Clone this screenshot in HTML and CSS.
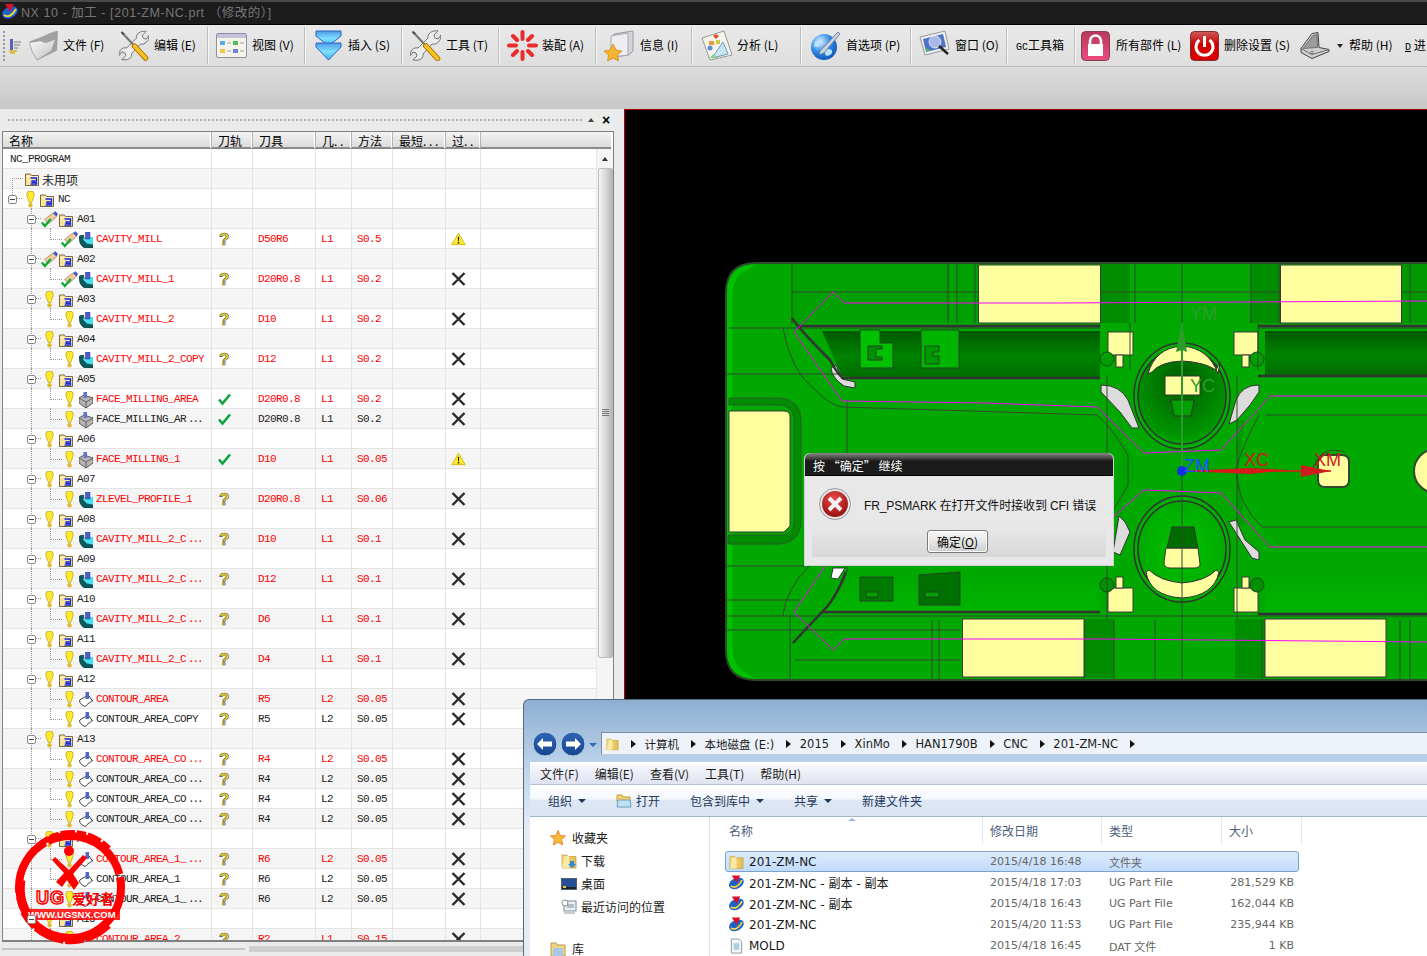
FILE: index.html
```html
<!DOCTYPE html>
<html lang="zh">
<head>
<meta charset="utf-8">
<title>NX 10 - 加工</title>
<link rel="stylesheet" href="styles.css">
</head>
<body>
<svg class="defs" aria-hidden="true">
  <defs>
    <linearGradient id="gFolderGrey" x1="0" y1="0" x2="1" y2="1"><stop offset="0" stop-color="#fcfcfc"/><stop offset=".6" stop-color="#d8d8d8"/><stop offset="1" stop-color="#9a9a9a"/></linearGradient>
    <linearGradient id="gBlue" x1="0" y1="0" x2="0" y2="1"><stop offset="0" stop-color="#4f9ae8"/><stop offset=".5" stop-color="#7fe0ff"/><stop offset="1" stop-color="#3ab4f6"/></linearGradient>
    <linearGradient id="gLock" x1="0" y1="0" x2="0" y2="1"><stop offset="0" stop-color="#b5395c"/><stop offset="1" stop-color="#ee4a7e"/></linearGradient>
    <linearGradient id="gPower" x1="0" y1="0" x2="0" y2="1"><stop offset="0" stop-color="#cc5a5a"/><stop offset=".45" stop-color="#cc0000"/><stop offset="1" stop-color="#e00000"/></linearGradient>
    <radialGradient id="gGlobe" cx=".35" cy=".3" r=".8"><stop offset="0" stop-color="#d8f0ff"/><stop offset=".5" stop-color="#2f8be6"/><stop offset="1" stop-color="#0b4db0"/></radialGradient>
    <radialGradient id="gErr" cx=".45" cy=".3" r=".8"><stop offset="0" stop-color="#e84a4a"/><stop offset="1" stop-color="#8c0808"/></radialGradient>
    <linearGradient id="gYF" x1="0" y1="0" x2="1" y2="0"><stop offset="0" stop-color="#f6dd82"/><stop offset="1" stop-color="#e5bd50"/></linearGradient>
    <linearGradient id="gNavBtn" x1="0" y1="0" x2="0" y2="1"><stop offset="0" stop-color="#2e66b4"/><stop offset="1" stop-color="#16458f"/></linearGradient>
    <linearGradient id="gBandT" x1="0" y1="0" x2="0" y2="1"><stop offset="0" stop-color="#005a00"/><stop offset=".55" stop-color="#008400"/><stop offset="1" stop-color="#006c00"/></linearGradient>
    <linearGradient id="gBandB" x1="0" y1="0" x2="0" y2="1"><stop offset="0" stop-color="#00a800"/><stop offset="1" stop-color="#00b400"/></linearGradient>
    <radialGradient id="gDomeT" cx=".5" cy=".35" r=".7"><stop offset="0" stop-color="#005c00"/><stop offset=".8" stop-color="#009400"/><stop offset="1" stop-color="#00b000"/></radialGradient>
    <radialGradient id="gDomeB" cx=".5" cy=".5" r=".7"><stop offset="0" stop-color="#00c400"/><stop offset="1" stop-color="#00a000"/></radialGradient>

    <symbol id="nx" viewBox="0 0 16 16">
      <path d="M0 11C0 5 6 2 12 2.500c4 .5 5 4 2 8-4 5-12 6-14 .5z" fill="#1b63c9"/>
      <path d="M2 11c4 3 9 0 12-6" fill="none" stroke="#ffd23a" stroke-width="1.800"/>
      <path d="M3 0h9L8 8z" fill="#d8102c"/>
    </symbol>
    <symbol id="wrench" viewBox="0 0 31 31">
      <path d="M8 18 18 8C17 3 23 0 28 1L24 5 25 8 28 9 31 5C31 11 27 15 22 14L13 24C14 29 9 31 3 30L7 26 6 23 3 22 0 26C0 21 3 17 8 18Z" fill="#ececec" stroke="#666" stroke-width=".9"/>
      <path d="M4 3 16 16" stroke="#777" stroke-width="2.200"/>
      <path d="M2.500 1.500 5 4" stroke="#444" stroke-width="2"/>
      <path d="M16 16 27.500 28.500" stroke="#a36d00" stroke-width="5.500" stroke-linecap="round"/>
      <path d="M16 16 27.500 28.500" stroke="#f8c020" stroke-width="3.800" stroke-linecap="round"/>
    </symbol>
    <symbol id="bulb" viewBox="0 0 16 16">
      <path d="M4.500 3a3.500 3 0 0 1 7 0c0 2-1.700 6-2.500 8h-2C6.200 9 4.500 5 4.500 3z" fill="#ffe930" stroke="#b79f12" stroke-width=".7"/>
      <circle cx="8" cy="13.500" r="1.700" fill="#f0c020" stroke="#b79f12" stroke-width=".5"/>
    </symbol>
    <symbol id="fld" viewBox="0 0 14 14">
      <path d="M.5 2h5l1 1.500h7v10H.5z" fill="#fbe59c" stroke="#77683a"/>
      <path d="M1 4h12v1H1z" fill="#fff6cf"/>
      <path d="M5.500 6h6v2.800H7v1.700h4.500v1.700h-6" fill="none" stroke="#1325e0" stroke-width="1.300"/>
    </symbol>
    <symbol id="pencheck" viewBox="0 0 17 17">
      <path d="M3.500 8.500 12 2l3.500 3.500-7.500 7z" fill="#f3caa0" stroke="#9c7a5a" stroke-width=".7"/>
      <path d="M12 2l2.500-1.700L17 3l-1.500 2.500z" fill="#4258c8"/>
      <path d="M.8 11.500l3 3.500 6-7" fill="none" stroke="#0cab2c" stroke-width="2.300"/>
    </symbol>
    <symbol id="mill" viewBox="0 0 14 16">
      <path d="M5 5h9v11H5z" fill="#47e0ee"/>
      <path d="M0 5c0-1.500 3-2 5-1.500L4 8l4 4 6 1v3H7C2.500 16 0 10 0 5z" fill="#0a5a60" stroke="#053033" stroke-width=".6"/>
      <path d="M6.500 0H11v7H6.500z" fill="#4b5fc8" stroke="#2a3790" stroke-width=".5"/>
    </symbol>
    <symbol id="face" viewBox="0 0 14 16">
      <path d="M0 6l5-3 9 3v5l-7 5-7-5z" fill="#b6b6b6" stroke="#3c3c3c" stroke-width=".8"/>
      <path d="M0 6l7 4 7-4M7 10v6" fill="none" stroke="#3c3c3c" stroke-width=".7"/>
      <path d="M4.500 0h3.500v6H4.500z" fill="#6575c9"/>
    </symbol>
    <symbol id="cont" viewBox="0 0 14 16">
      <path d="M.8 8C3 6 5 6 7 4h3l3.500 5c-2 0-2 2-4 2-1 2-3 4-4.500 3C3 13 0 11 .8 8z" fill="#fff" stroke="#222" stroke-width=".9"/>
      <path d="M6.500 0H10v7H6.500z" fill="#5466c8"/>
    </symbol>
    <symbol id="warn" viewBox="0 0 16 14">
      <path d="M8 .8 15.300 13H.7z" fill="#ffe92e" stroke="#c9a900" stroke-width=".8"/>
      <path d="M7.300 4.500h1.400l-.2 5h-1zM7.200 10.300h1.600v1.600H7.200z" fill="#222"/>
    </symbol>
    <symbol id="cross" viewBox="0 0 14 14">
      <path d="M1 1 13 13M13 1 1 13" stroke="#2b2b2b" stroke-width="2.400" fill="none"/>
    </symbol>
    <symbol id="tick" viewBox="0 0 14 14">
      <path d="M1.500 7.500 5 11.500 12.500 2.500" fill="none" stroke="#10a040" stroke-width="2.500"/>
    </symbol>
    <symbol id="yfolder" viewBox="0 0 16 16">
      <path d="M1 2h5l1 1.500h8V15H1z" fill="url(#gYF)" stroke="#c9a645" stroke-width=".8"/>
      <path d="M1 15 3.500 3.500 8 3v12z" fill="#fbeaa5"/>
    </symbol>
  </defs>
</svg>

<div class="app">
  <header class="titlebar">
    <svg class="tb-logo"><use href="#nx"/></svg>
    <span class="tb-text">NX 10 - 加工 - [201-ZM-NC.prt （修改的）]</span>
  </header>

  <nav class="menubar">
    <i class="grip"></i>
    <svg class="mini" viewBox="0 0 13 16"><path d="M2 1h3v11H2z" fill="#5763b8"/><path d="M6 4h7M6 7h6M6 10h4" stroke="#7a7a7a"/><path d="M1 13h8M2 15h5" stroke="#d8b320" stroke-width="1.500"/></svg>
    <div class="tool first">
      <svg class="ico i29" viewBox="0 0 29 31"><path d="M1 11 14 6l6-3 9-3-1 20-6 3L9 29z" fill="#a2a2a2" stroke="#8a8a8a" stroke-width=".6"/><path d="M0 12l11-2 6 2 10-4-4 13-15 9Q2 23 0 12z" fill="url(#gFolderGrey)" stroke="#8a8a8a" stroke-width=".7"/></svg>
      <span class="lb w41">文件 (F)</span>
    </div>
    <div class="tool t15"><svg class="ico i30"><use href="#wrench"/></svg><span class="lb w42">编辑 (E)</span></div>
    <i class="sep"></i>
    <div class="tool">
      <svg class="ico" viewBox="0 0 31 31"><rect x="0.500" y="3.500" width="30" height="24" rx="1.500" fill="#f6f3ea" stroke="#8f8fa8"/><path d="M1 4h29v4H1z" fill="#c3c3dc"/><rect x="4" y="11" width="5" height="4" fill="#5aa9e0"/><path d="M11 13h4M24 13h4M11 21h4M24 21h4" stroke="#a5a5a5"/><rect x="17" y="11" width="5" height="4" fill="#53bf53"/><rect x="4" y="19" width="5" height="4" fill="#eec84d"/><rect x="17" y="19" width="5" height="4" fill="#6f82d6"/></svg>
      <span class="lb w41">视图 (V)</span>
    </div>
    <i class="sep"></i>
    <div class="tool g4">
      <svg class="ico" viewBox="0 0 31 31"><path d="M3 1h25v5L15.500 16 3 6z" fill="url(#gBlue)" stroke="#2a62c0"/><path d="M3 13h25v4L15.500 30 3 17z" fill="url(#gBlue)" stroke="#2a62c0"/></svg>
      <span class="lb w42">插入 (S)</span>
    </div>
    <i class="sep"></i>
    <div class="tool"><svg class="ico"><use href="#wrench"/></svg><span class="lb w41">工具 (T)</span></div>
    <i class="sep"></i>
    <div class="tool g4">
      <svg class="ico" viewBox="0 0 31 31"><g stroke="#ea2c2c" stroke-width="4" stroke-linecap="round"><path d="M15.500 2v7M15.500 22v7M2 15.500h7M22 15.500h7M6 6l4 4M21 21l4 4M25 6l-4 4M10 21l-4 4"/></g></svg>
      <span class="lb w42">装配 (A)</span>
    </div>
    <i class="sep"></i>
    <div class="tool">
      <svg class="ico" viewBox="0 0 31 31"><path d="M10 4 29 1v20l-4 4-15 2z" fill="#d4d4dc" stroke="#9a9aa2"/><path d="M7 6 24 3v22l-17 2z" fill="#eeeef2" stroke="#aaa"/><path d="M9 14l3 6 6 1-4.500 4 1 6-5.500-3-5.500 3 1-6L0 21l6-1z" fill="#f6b52c" stroke="#c98112" stroke-width=".7"/></svg>
      <span class="lb w40">信息 (I)</span>
    </div>
    <i class="sep"></i>
    <div class="tool t1">
      <svg class="ico" viewBox="0 0 31 31"><path d="M1 8 23 1l8 24-22 5z" fill="#f5f3ec" stroke="#9a9a9a"/><path d="M12 6l3-2 3 2-3 3z" fill="#e05030"/><path d="M8 11h5v4H8z" fill="#e89a3a"/><circle cx="9" cy="18" r="2.500" fill="#5b8ed8"/><path d="M15 10h4v4h-4z" fill="#d0c840"/><path d="M11 28 22 12l5 12z" fill="#c9e4f4" stroke="#6b9dc0"/><path d="M12 24l5 4H9z" fill="#8fd08f"/></svg>
      <span class="lb w40">分析 (L)</span>
    </div>
    <i class="sep far"></i>
    <div class="tool">
      <svg class="ico" viewBox="0 0 31 31"><circle cx="14" cy="17" r="13" fill="url(#gGlobe)"/><path d="M5 12c4-3 6 0 5 3s-5 2-6 1zM15 20c4-2 8-1 7 3-2 3-6 4-7 1z" fill="#b8e2ff"/><path d="M10 21 28 2l2 2-16 19-5 2z" fill="#c8d3e0" stroke="#5a6b85" stroke-width=".8"/></svg>
      <span class="lb w53">首选项 (P)</span>
    </div>
    <i class="sep"></i>
    <div class="tool">
      <svg class="ico" viewBox="0 0 31 31"><path d="M1 7 26 1l4 18-24 6z" fill="#eee" stroke="#999"/><path d="M4 9 24 4l3 13-20 5z" fill="#4e73c5"/><circle cx="16" cy="12" r="6" fill="#a7b9e8" stroke="#dde"/><path d="M20 16l9 8" stroke="#222" stroke-width="2.500"/><path d="M7 19h3v2H7z" fill="#40d040"/></svg>
      <span class="lb w40">窗口 (O)</span>
    </div>
    <i class="sep"></i>
    <span class="lb w48 solo"><span class="mono">GC</span>工具箱</span>
    <i class="sep tight"></i>
    <div class="tool g6">
      <svg class="ico i29" viewBox="0 0 29 30"><rect x=".5" y=".5" width="28" height="29" rx="4" fill="url(#gLock)" stroke="#804055"/><path d="M9 14V10a5.500 5.500 0 0 1 11 0v4" fill="none" stroke="#fff" stroke-width="2.500"/><rect x="7" y="13" width="15" height="12" fill="#fff"/></svg>
      <span class="lb w64">所有部件 (L)</span>
    </div>
    <div class="tool t10">
      <svg class="ico i29" viewBox="0 0 29 30"><rect x=".5" y=".5" width="28" height="29" rx="4" fill="url(#gPower)" stroke="#803030"/><path d="M9.500 9a8.500 8.500 0 1 0 10 0" fill="none" stroke="#fff" stroke-width="3"/><path d="M14.500 5v11" stroke="#fff" stroke-width="3"/></svg>
      <span class="lb w65">删除设置 (S)</span>
    </div>
    <div class="tool t11"><svg class="ico i30" viewBox="0 0 30 30"><path d="M1 18 12 3l6-1 1 15 10 2v2l-17 7-11-6z" fill="#cfcfcf" stroke="#444"/><path d="M3 18 13 5l4-1 .5 13z" fill="#9c9c9c" stroke="#555" stroke-width=".7"/><path d="M1 18l11 6 17-5" fill="none" stroke="#555" stroke-width=".8"/><circle cx="12" cy="22" r="1.300" fill="#eee" stroke="#444" stroke-width=".7"/></svg></div>
    <i class="caret"></i>
    <span class="lb w41">帮助 (H)</span>
    <span class="lb w30 next"><u class="mono">D</u> 进</span>
  </nav>

  <div class="ribbon"></div>

  <main class="work">
    <section class="panel">
      <div class="phead"><i class="pgrip"></i><span class="pup"></span><span class="pclose">×</span></div>
      <div class="navtree">
        <div class="thead cols">
          <span>名称</span><span>刀轨</span><span>刀具</span><span>几. .</span><span>方法</span><span>最短. . .</span><span>过. .</span><span></span>
        </div>
        <div class="tbody">
          <div class="rows">
            <div class="row cols"><span class="name plain"><b>NC_PROGRAM</b></span><span></span><span></span><span></span><span></span><span></span><span></span></div>
            <div class="row cols"><span class="name unused"><svg class="fd"><use href="#fld"/></svg><b class="cjk">未用项</b></span><span></span><span></span><span></span><span></span><span></span><span></span></div>
            <div class="row cols"><span class="name lv0"><i class="mn"></i><svg class="st"><use href="#bulb"/></svg><svg class="fd"><use href="#fld"/></svg><b>NC</b></span><span></span><span></span><span></span><span></span><span></span><span></span></div>

            <div class="row cols"><span class="name lv1"><i class="mn"></i><svg class="st"><use href="#pencheck"/></svg><svg class="fd"><use href="#fld"/></svg><b>A01</b></span><span></span><span></span><span></span><span></span><span></span><span></span></div>
            <div class="row cols red"><span class="name lv2"><svg class="st"><use href="#pencheck"/></svg><svg class="fd"><use href="#mill"/></svg><b>CAVITY_MILL</b></span><span><em class="q">?</em></span><span>D50R6</span><span>L1</span><span>S0.5</span><span></span><span><svg class="fl"><use href="#warn"/></svg></span></div>

            <div class="row cols"><span class="name lv1"><i class="mn"></i><svg class="st"><use href="#pencheck"/></svg><svg class="fd"><use href="#fld"/></svg><b>A02</b></span><span></span><span></span><span></span><span></span><span></span><span></span></div>
            <div class="row cols red"><span class="name lv2"><svg class="st"><use href="#pencheck"/></svg><svg class="fd"><use href="#mill"/></svg><b>CAVITY_MILL_1</b></span><span><em class="q">?</em></span><span>D20R0.8</span><span>L1</span><span>S0.2</span><span></span><span><svg class="fl"><use href="#cross"/></svg></span></div>

            <div class="row cols"><span class="name lv1"><i class="mn"></i><svg class="st"><use href="#bulb"/></svg><svg class="fd"><use href="#fld"/></svg><b>A03</b></span><span></span><span></span><span></span><span></span><span></span><span></span></div>
            <div class="row cols red"><span class="name lv2"><svg class="st"><use href="#bulb"/></svg><svg class="fd"><use href="#mill"/></svg><b>CAVITY_MILL_2</b></span><span><em class="q">?</em></span><span>D10</span><span>L1</span><span>S0.2</span><span></span><span><svg class="fl"><use href="#cross"/></svg></span></div>

            <div class="row cols"><span class="name lv1"><i class="mn"></i><svg class="st"><use href="#bulb"/></svg><svg class="fd"><use href="#fld"/></svg><b>A04</b></span><span></span><span></span><span></span><span></span><span></span><span></span></div>
            <div class="row cols red"><span class="name lv2"><svg class="st"><use href="#bulb"/></svg><svg class="fd"><use href="#mill"/></svg><b>CAVITY_MILL_2_COPY</b></span><span><em class="q">?</em></span><span>D12</span><span>L1</span><span>S0.2</span><span></span><span><svg class="fl"><use href="#cross"/></svg></span></div>

            <div class="row cols"><span class="name lv1"><i class="mn"></i><svg class="st"><use href="#bulb"/></svg><svg class="fd"><use href="#fld"/></svg><b>A05</b></span><span></span><span></span><span></span><span></span><span></span><span></span></div>
            <div class="row cols red"><span class="name lv2"><svg class="st"><use href="#bulb"/></svg><svg class="fd"><use href="#face"/></svg><b>FACE_MILLING_AREA</b></span><span><svg class="fl tk"><use href="#tick"/></svg></span><span>D20R0.8</span><span>L1</span><span>S0.2</span><span></span><span><svg class="fl"><use href="#cross"/></svg></span></div>
            <div class="row cols"><span class="name lv2"><svg class="st"><use href="#bulb"/></svg><svg class="fd"><use href="#face"/></svg><b>FACE_MILLING_AR<i class="el">...</i></b></span><span><svg class="fl tk"><use href="#tick"/></svg></span><span>D20R0.8</span><span>L1</span><span>S0.2</span><span></span><span><svg class="fl"><use href="#cross"/></svg></span></div>

            <div class="row cols"><span class="name lv1"><i class="mn"></i><svg class="st"><use href="#bulb"/></svg><svg class="fd"><use href="#fld"/></svg><b>A06</b></span><span></span><span></span><span></span><span></span><span></span><span></span></div>
            <div class="row cols red"><span class="name lv2"><svg class="st"><use href="#bulb"/></svg><svg class="fd"><use href="#face"/></svg><b>FACE_MILLING_1</b></span><span><svg class="fl tk"><use href="#tick"/></svg></span><span>D10</span><span>L1</span><span>S0.05</span><span></span><span><svg class="fl"><use href="#warn"/></svg></span></div>

            <div class="row cols"><span class="name lv1"><i class="mn"></i><svg class="st"><use href="#bulb"/></svg><svg class="fd"><use href="#fld"/></svg><b>A07</b></span><span></span><span></span><span></span><span></span><span></span><span></span></div>
            <div class="row cols red"><span class="name lv2"><svg class="st"><use href="#bulb"/></svg><svg class="fd"><use href="#mill"/></svg><b>ZLEVEL_PROFILE_1</b></span><span><em class="q">?</em></span><span>D20R0.8</span><span>L1</span><span>S0.06</span><span></span><span><svg class="fl"><use href="#cross"/></svg></span></div>

            <div class="row cols"><span class="name lv1"><i class="mn"></i><svg class="st"><use href="#bulb"/></svg><svg class="fd"><use href="#fld"/></svg><b>A08</b></span><span></span><span></span><span></span><span></span><span></span><span></span></div>
            <div class="row cols red"><span class="name lv2"><svg class="st"><use href="#bulb"/></svg><svg class="fd"><use href="#mill"/></svg><b>CAVITY_MILL_2_C<i class="el">...</i></b></span><span><em class="q">?</em></span><span>D10</span><span>L1</span><span>S0.1</span><span></span><span><svg class="fl"><use href="#cross"/></svg></span></div>

            <div class="row cols"><span class="name lv1"><i class="mn"></i><svg class="st"><use href="#bulb"/></svg><svg class="fd"><use href="#fld"/></svg><b>A09</b></span><span></span><span></span><span></span><span></span><span></span><span></span></div>
            <div class="row cols red"><span class="name lv2"><svg class="st"><use href="#bulb"/></svg><svg class="fd"><use href="#mill"/></svg><b>CAVITY_MILL_2_C<i class="el">...</i></b></span><span><em class="q">?</em></span><span>D12</span><span>L1</span><span>S0.1</span><span></span><span><svg class="fl"><use href="#cross"/></svg></span></div>

            <div class="row cols"><span class="name lv1"><i class="mn"></i><svg class="st"><use href="#bulb"/></svg><svg class="fd"><use href="#fld"/></svg><b>A10</b></span><span></span><span></span><span></span><span></span><span></span><span></span></div>
            <div class="row cols red"><span class="name lv2"><svg class="st"><use href="#bulb"/></svg><svg class="fd"><use href="#mill"/></svg><b>CAVITY_MILL_2_C<i class="el">...</i></b></span><span><em class="q">?</em></span><span>D6</span><span>L1</span><span>S0.1</span><span></span><span><svg class="fl"><use href="#cross"/></svg></span></div>

            <div class="row cols"><span class="name lv1"><i class="mn"></i><svg class="st"><use href="#bulb"/></svg><svg class="fd"><use href="#fld"/></svg><b>A11</b></span><span></span><span></span><span></span><span></span><span></span><span></span></div>
            <div class="row cols red"><span class="name lv2"><svg class="st"><use href="#bulb"/></svg><svg class="fd"><use href="#mill"/></svg><b>CAVITY_MILL_2_C<i class="el">...</i></b></span><span><em class="q">?</em></span><span>D4</span><span>L1</span><span>S0.1</span><span></span><span><svg class="fl"><use href="#cross"/></svg></span></div>

            <div class="row cols"><span class="name lv1"><i class="mn"></i><svg class="st"><use href="#bulb"/></svg><svg class="fd"><use href="#fld"/></svg><b>A12</b></span><span></span><span></span><span></span><span></span><span></span><span></span></div>
            <div class="row cols red"><span class="name lv2"><svg class="st"><use href="#bulb"/></svg><svg class="fd"><use href="#cont"/></svg><b>CONTOUR_AREA</b></span><span><em class="q">?</em></span><span>R5</span><span>L2</span><span>S0.05</span><span></span><span><svg class="fl"><use href="#cross"/></svg></span></div>
            <div class="row cols"><span class="name lv2"><svg class="st"><use href="#bulb"/></svg><svg class="fd"><use href="#cont"/></svg><b>CONTOUR_AREA_COPY</b></span><span><em class="q">?</em></span><span>R5</span><span>L2</span><span>S0.05</span><span></span><span><svg class="fl"><use href="#cross"/></svg></span></div>

            <div class="row cols"><span class="name lv1"><i class="mn"></i><svg class="st"><use href="#bulb"/></svg><svg class="fd"><use href="#fld"/></svg><b>A13</b></span><span></span><span></span><span></span><span></span><span></span><span></span></div>
            <div class="row cols red"><span class="name lv2"><svg class="st"><use href="#bulb"/></svg><svg class="fd"><use href="#cont"/></svg><b>CONTOUR_AREA_CO<i class="el">...</i></b></span><span><em class="q">?</em></span><span>R4</span><span>L2</span><span>S0.05</span><span></span><span><svg class="fl"><use href="#cross"/></svg></span></div>
            <div class="row cols"><span class="name lv2"><svg class="st"><use href="#bulb"/></svg><svg class="fd"><use href="#cont"/></svg><b>CONTOUR_AREA_CO<i class="el">...</i></b></span><span><em class="q">?</em></span><span>R4</span><span>L2</span><span>S0.05</span><span></span><span><svg class="fl"><use href="#cross"/></svg></span></div>
            <div class="row cols"><span class="name lv2"><svg class="st"><use href="#bulb"/></svg><svg class="fd"><use href="#cont"/></svg><b>CONTOUR_AREA_CO<i class="el">...</i></b></span><span><em class="q">?</em></span><span>R4</span><span>L2</span><span>S0.05</span><span></span><span><svg class="fl"><use href="#cross"/></svg></span></div>
            <div class="row cols"><span class="name lv2"><svg class="st"><use href="#bulb"/></svg><svg class="fd"><use href="#cont"/></svg><b>CONTOUR_AREA_CO<i class="el">...</i></b></span><span><em class="q">?</em></span><span>R4</span><span>L2</span><span>S0.05</span><span></span><span><svg class="fl"><use href="#cross"/></svg></span></div>

            <div class="row cols"><span class="name lv1"><i class="mn"></i><svg class="st"><use href="#bulb"/></svg><svg class="fd"><use href="#fld"/></svg><b>A14</b></span><span></span><span></span><span></span><span></span><span></span><span></span></div>
            <div class="row cols red"><span class="name lv2"><svg class="st"><use href="#bulb"/></svg><svg class="fd"><use href="#cont"/></svg><b>CONTOUR_AREA_1_<i class="el">...</i></b></span><span><em class="q">?</em></span><span>R6</span><span>L2</span><span>S0.05</span><span></span><span><svg class="fl"><use href="#cross"/></svg></span></div>
            <div class="row cols"><span class="name lv2"><svg class="st"><use href="#bulb"/></svg><svg class="fd"><use href="#cont"/></svg><b>CONTOUR_AREA_1</b></span><span><em class="q">?</em></span><span>R6</span><span>L2</span><span>S0.05</span><span></span><span><svg class="fl"><use href="#cross"/></svg></span></div>
            <div class="row cols"><span class="name lv2"><svg class="st"><use href="#bulb"/></svg><svg class="fd"><use href="#cont"/></svg><b>CONTOUR_AREA_1_<i class="el">...</i></b></span><span><em class="q">?</em></span><span>R6</span><span>L2</span><span>S0.05</span><span></span><span><svg class="fl"><use href="#cross"/></svg></span></div>

            <div class="row cols"><span class="name lv1"><i class="mn"></i><svg class="st"><use href="#bulb"/></svg><svg class="fd"><use href="#fld"/></svg><b>A15</b></span><span></span><span></span><span></span><span></span><span></span><span></span></div>
            <div class="row cols red"><span class="name lv2"><svg class="st"><use href="#bulb"/></svg><svg class="fd"><use href="#cont"/></svg><b>CONTOUR_AREA_2</b></span><span><em class="q">?</em></span><span>R2</span><span>L1</span><span>S0.15</span><span></span><span><svg class="fl"><use href="#cross"/></svg></span></div>
          </div>
          <aside class="vscroll"><i class="vup"></i><i class="vthumb"></i></aside>
        </div>
      </div>
      <div class="hscroll"><i class="h1"></i><i class="h2"></i></div>
    </section>

    <section class="viewport">
      <svg class="model" viewBox="625 110 802 846" aria-label="模型">
        <path d="M756 263H1440V680H756Q726 680 726 650V293Q726 263 756 263Z" fill="#00a800" stroke="#2c4a2c" stroke-width="2"/>
        <path d="M727 293Q727 265 756 264l-8 6Q733 275 732 296V645Q733 668 748 674l8 5Q727 678 727 650Z" fill="#00c000"/>
        <!-- top and bottom bands -->
        <rect x="793" y="264" width="185" height="59" fill="#00a000"/>
        <rect x="1100" y="264" width="30" height="59" fill="#008e00"/>
        <rect x="1250" y="264" width="30" height="59" fill="#008e00"/>
        <rect x="1084" y="619" width="30" height="59" fill="#008e00"/>
        <rect x="1235" y="619" width="30" height="59" fill="#008e00"/>
        <rect x="1401" y="264" width="26" height="59" fill="#009800"/>
        <path d="M822 331H1100V378H860L842 376Z" fill="url(#gBandT)"/>
        <path d="M1265 331H1427V375H1265Z" fill="url(#gBandT)"/>
        <path d="M846 573H1100V612H820Z" fill="url(#gBandB)"/>
        <path d="M1265 574H1427V612H1265Z" fill="url(#gBandB)"/>
        <path d="M1107 420H1122L1135 470 1122 520H1107Z" fill="#00a000" opacity=".5"/>
        <path d="M1237 420H1245L1238 471 1245 525H1237Z" fill="#008a00" opacity=".5"/>
        <!-- yellow faces -->
        <g fill="#ffffa0" stroke="#3a3a3a" stroke-width="1">
          <rect x="978.500" y="265" width="122" height="58"/>
          <rect x="1280.500" y="265" width="121" height="58"/>
          <rect x="962.500" y="619" width="122" height="58"/>
          <rect x="1265" y="619" width="121" height="58"/>
          <path d="M729 411H784Q790 411 790 417V526L784 532H729Z"/>
          <rect x="1108" y="332" width="25" height="23"/>
          <rect x="1234" y="332" width="24" height="23"/>
          <rect x="1108" y="588" width="25" height="24"/>
          <rect x="1234" y="588" width="24" height="24"/>
          <rect x="1116" y="355" width="7" height="12"/>
          <rect x="1242" y="355" width="7" height="12"/>
          <rect x="1116" y="577" width="7" height="11"/>
          <rect x="1242" y="577" width="7" height="11"/>
        </g>
        <path d="M729 398H780Q801 400 801 420V525Q798 543 780 544H728V535H784Q794 532 794 522V418Q792 406 780 405H729Z" fill="#008c00" stroke="#2d5a2d" stroke-width="1"/>
        <!-- locks -->
        <g stroke="#224422" stroke-width="1">
          <path d="M860 330H880V343H893V368H860Z" fill="#00c000"/>
          <path d="M921 330H959V368H921Z" fill="#00b400"/>
          <path d="M868 346h14v3h-6v8h6v3h-14z" fill="#009000"/>
          <path d="M925 346h14v6h-6v4h6v8h-14z" fill="#009800"/>
          <path d="M860 577H893V601H860Z" fill="#007a00"/>
          <path d="M919 575 960 572V605H919Z" fill="#007000"/>
          <path d="M866 592h12v5h-12zM925 592h14v5h-14z" fill="#00a000"/>
          <circle cx="1107" cy="359" r="7" fill="#00a000"/>
          <circle cx="1257" cy="359" r="7" fill="#00a000"/>
          <circle cx="1107" cy="585" r="7" fill="#009000"/>
          <circle cx="1257" cy="585" r="7" fill="#009000"/>
        </g>
        <!-- grey wings -->
        <g fill="#dcdcdc" stroke="#333" stroke-width="1">
          <path d="M831 368l5-3 6 14 13 3v6l-11-2Q832 378 831 368Z"/>
          <path d="M1101 385Q1120 385 1128 400L1139 428H1132L1120 412 1101 392Z"/>
          <path d="M1259 385Q1242 385 1236 400L1229 424 1237 420 1250 405 1259 392Z"/>
          <path d="M1113 552 1119 516 1125 522 1130 532 1120 555Z"/>
          <path d="M1252 558 1229 522 1236 520 1245 540 1259 552V560Z"/>
          <path d="M833 568H845L838 579 831 578Z" fill="#fff"/>
        </g>
        <!-- domes -->
        <ellipse cx="1182" cy="396" rx="48" ry="53" fill="#00b000" stroke="#333" stroke-width="1.500"/>
        <ellipse cx="1182" cy="396" rx="44" ry="48" fill="url(#gDomeT)" stroke="#333" stroke-width="1.500"/>
        <ellipse cx="1182" cy="549" rx="48" ry="53" fill="#00b000" stroke="#333" stroke-width="1.500"/>
        <ellipse cx="1182" cy="549" rx="44" ry="48" fill="url(#gDomeB)" stroke="#333" stroke-width="1.500"/>
        <g fill="#ffffa0" stroke="#333" stroke-width="1">
          <path d="M1148 374Q1155 348 1182 346Q1209 348 1218 374L1220 362 1216 370Q1204 362 1182 361Q1160 362 1152 372Z"/>
          <path d="M1165 376H1200V395H1165Z"/>
          <path d="M1146 572Q1150 596 1182 598Q1214 596 1219 572L1216 570Q1206 581 1182 583Q1160 581 1149 570Z"/>
          <path d="M1166 548H1198L1200 564Q1200 568 1194 568H1170Q1164 568 1164 562Z"/>
        </g>
        <path d="M1171 400H1194L1191 416H1174Z" fill="#00a000" stroke="#333"/>
        <path d="M1172 527H1194L1198 548H1167Z" fill="#006c00" stroke="#333"/>
        <!-- thin edges -->
        <g fill="none" stroke="#2f4a2f" stroke-width="1">
          <path d="M792 264V325M948 264V323M957 264V323M975 264V323M1135 264V323M1251 264V323M1279 264V323M1410 264V323"/>
          <path d="M792 292H978M1100 292H1280M1401 292H1427"/>
          <path d="M729 328H1100M1258 328H1427"/>
          <path d="M727 374H842M1259 376H1427"/>
          <path d="M783 328Q790 370 815 390 830 405 842 407L1097 415Q1110 425 1128 455V485Q1120 500 1112 512"/>
          <path d="M1259 415Q1240 450 1236 471 1238 505 1262 527H1427"/>
          <path d="M1265 415H1427"/>
          <path d="M1182 264V680M1107 375V620M1237 375V620M1130 323V370M1258 323V370"/>
          <path d="M847 400V572M848 556H1100"/>
          <path d="M727 566H805M727 600H800M727 616H1427M727 630H960"/>
          <path d="M790 615V680M795 660H960M932 620V680M939 620V680M1084 620V680M1114 620V680M1155 620V680M1262 620V680M1400 620V680M1410 620V680"/>
          <path d="M783 616Q785 590 810 565"/>
          <path d="M1312 471Q1320 444 1345 452"/>
        </g>
        <g fill="none" stroke="#333" stroke-width="2.500">
          <path d="M797 326H1100M1258 326H1427"/>
          <path d="M792 318Q800 330 830 360 838 375 843 378L1100 378"/>
          <path d="M1258 376H1427"/>
          <path d="M846 572Q835 600 822 612 805 630 793 643"/>
          <path d="M822 612H1100M1258 614H1427"/>
        </g>
        <path d="M1318 462Q1318 455 1325 455H1342Q1349 455 1349 462V480Q1349 487 1342 487H1325Q1318 487 1318 480Z" fill="#ffffa0" stroke="#2f4a2f" stroke-width="2"/>
        <circle cx="1436" cy="471" r="22" fill="#ffffa0" stroke="#2f4a2f" stroke-width="2"/>
        <!-- toolpath -->
        <g fill="none" stroke="#ff00ff" stroke-width="1">
          <path d="M794 332 833 292 844 303H1056L1427 301"/>
          <path d="M794 332 842 401 984 403 1097 407 1144 453 1221 450 1270 396H1427"/>
          <path d="M1112 518 1144 490 1221 493 1270 547H1427"/>
          <path d="M826 565 794 612 833 650 844 639H1100L1427 642"/>
        </g>
        <!-- axes -->
        <path d="M1182 471V323" stroke="#2c9c2c" stroke-width="2"/>
        <path d="M1182 350 1176 352 1182 322 1187 352Z" fill="#2c9c2c"/>
        <path d="M1182 471 1250 468 1290 470 1250 474Z" fill="#d01c1c"/>
        <path d="M1182 471H1331" stroke="#e01818" stroke-width="1.500"/>
        <path d="M1301 465 1331 471 1301 477Z" fill="#d01c1c"/>
        <circle cx="1182" cy="471" r="5" fill="#1530e0"/>
        <g class="axis">
          <text x="1190" y="320" fill="#2d9d2d">YM</text>
          <text x="1190" y="392" fill="#2d9d2d">YC</text>
          <text x="1184" y="472" fill="#1a50ff">ZM</text>
          <text x="1244" y="466" fill="#d01818">XC</text>
          <text x="1314" y="466" fill="#d01818">XM</text>
        </g>
      </svg>

      <div class="dialog">
        <div class="dlg-title">按 “确定” 继续</div>
        <div class="dlg-msg">
          <svg class="dlg-ico" viewBox="0 0 32 32"><circle cx="16" cy="16" r="15.500" fill="#e8e8e8" stroke="#999"/><circle cx="16" cy="16" r="13" fill="url(#gErr)"/><path d="M10 10 22 22M22 10 10 22" stroke="#f2f2f2" stroke-width="4"/></svg>
          <span>FR_PSMARK 在打开文件时接收到 CFI 错误</span>
        </div>
        <div class="dlg-foot"><button class="dlg-btn">确定(<u>O</u>)</button></div>
      </div>
    </section>
  </main>

  <svg class="stamp" viewBox="8 822 130 134" aria-label="UG爱好者">
    <g fill="none" stroke="#f00">
      <circle cx="70" cy="887" r="51" stroke-width="8" stroke-dasharray="150 4 60 3 90 3"/>
      <path d="M30 855A51 51 0 0 1 110 850" stroke-width="6" stroke-dasharray="9 2 14 2"/>
      <path d="M21 880A50 50 0 0 0 30 918" stroke-width="9"/>
      <path d="M24 912A53 53 0 0 0 108 925" stroke-width="8" stroke-dasharray="18 2 30 2"/>
    </g>
    <circle cx="69" cy="851" r="5" fill="#f00"/>
    <path d="M55 857 69 870 83 855 87 858 73 874 79 883 74 890 67 880 62 887 56 882 64 873 52 860Z" fill="#f00"/>
    <text class="st-ug" x="36" y="904">UG</text>
    <text class="st-cn" x="72" y="904">爱好者</text>
    <rect x="27" y="909" width="93" height="11" fill="#f00" opacity=".85"/>
    <text class="st-url" x="28" y="918">WWW.UGSNX.COM</text>
  </svg>

  <section class="explorer">
    <div class="ex-head">
      <svg class="ex-nav" viewBox="0 0 71 24">
        <circle cx="15" cy="12" r="12" fill="url(#gNavBtn)" stroke="#bcd0e8"/>
        <path d="M7 12l6-6v3.500h9v5h-9V18z" fill="#fff"/>
        <circle cx="43" cy="12" r="12" fill="url(#gNavBtn)" stroke="#bcd0e8"/>
        <path d="M51 12l-6-6v3.500h-9v5h9V18z" fill="#fff"/>
        <path d="M59 11h8l-4 4z" fill="#2e6bb5"/>
      </svg>
      <div class="addr">
        <svg class="ad-ico"><use href="#yfolder"/></svg>
        <i class="tri"></i><span>计算机</span>
        <i class="tri"></i><span>本地磁盘 (E:)</span>
        <i class="tri"></i><span>2015</span>
        <i class="tri"></i><span>XinMo</span>
        <i class="tri"></i><span>HAN1790B</span>
        <i class="tri"></i><span>CNC</span>
        <i class="tri"></i><span>201-ZM-NC</span>
        <i class="tri"></i>
      </div>
    </div>
    <div class="ex-menu">
      <span>文件(F)</span><span>编辑(E)</span><span>查看(V)</span><span>工具(T)</span><span>帮助(H)</span>
    </div>
    <div class="ex-tools">
      <span class="act a1">组织<i class="dn"></i></span>
      <span class="act a2"><svg class="act-ico" viewBox="0 0 16 16"><path d="M1 2h5l1 2h7v5H1z" fill="#f3cf6b" stroke="#c49d3a"/><path d="M1 14 2 7h12l1 7z" fill="#bfe0f4" stroke="#6ca0c0"/></svg>打开</span>
      <span class="act a3">包含到库中<i class="dn"></i></span>
      <span class="act a4">共享<i class="dn"></i></span>
      <span class="act a5">新建文件夹</span>
    </div>
    <div class="ex-body">
      <aside class="ex-side">
        <div class="sd top"><svg class="sd-ico" viewBox="0 0 16 16"><path d="M8 .5l2.200 5 5.300.5-4 3.500 1.200 5.500L8 12.200 3.300 15l1.200-5.500-4-3.500 5.300-.5z" fill="#fbb83d" stroke="#d87a1a" stroke-width=".8"/></svg>收藏夹</div>
        <div class="sd sub"><svg class="sd-ico" viewBox="0 0 16 16"><use href="#yfolder" width="16" height="16"/><path d="M9 8h4v3h2l-4 4-4-4h2z" fill="#2e8bdc"/></svg>下载</div>
        <div class="sd sub"><svg class="sd-ico" viewBox="0 0 16 16"><rect x=".5" y="2.500" width="15" height="11" fill="#274f94" stroke="#506070"/><path d="M1 11h14v2H1z" fill="#222"/><path d="M2 10h3v2H2z" fill="#f0c040"/></svg>桌面</div>
        <div class="sd sub"><svg class="sd-ico" viewBox="0 0 16 16"><rect x="3" y="2" width="12" height="10" fill="#eef1f4" stroke="#7a8aa0"/><circle cx="4" cy="4" r="3" fill="#fff" stroke="#8a8a8a"/><path d="M6 6h7M6 8h7" stroke="#7a8aa0"/><path d="M3 12h11v3H3z" fill="#c8ccd0"/></svg>最近访问的位置</div>
        <div class="sd top lib"><svg class="sd-ico" viewBox="0 0 16 16"><path d="M1 2h5l1 2h8v11H1z" fill="#f3d680" stroke="#b59a50"/><rect x="3" y="7" width="10" height="8" fill="#a8c8e8"/></svg>库</div>
      </aside>
      <div class="ex-files">
        <div class="fhead">
          <span class="c1">名称</span><span class="c2">修改日期</span><span class="c3">类型</span><span class="c4">大小</span>
        </div>
        <div class="frow sel"><span class="fn"><svg class="f-ico"><use href="#yfolder"/></svg>201-ZM-NC</span><span class="fd2">2015/4/18 16:48</span><span>文件夹</span><span class="sz"></span></div>
        <div class="frow"><span class="fn"><svg class="f-ico"><use href="#nx"/></svg>201-ZM-NC - 副本 - 副本</span><span class="fd2">2015/4/18 17:03</span><span>UG Part File</span><span class="sz">281,529 KB</span></div>
        <div class="frow"><span class="fn"><svg class="f-ico"><use href="#nx"/></svg>201-ZM-NC - 副本</span><span class="fd2">2015/4/18 16:43</span><span>UG Part File</span><span class="sz">162,044 KB</span></div>
        <div class="frow"><span class="fn"><svg class="f-ico"><use href="#nx"/></svg>201-ZM-NC</span><span class="fd2">2015/4/20 11:53</span><span>UG Part File</span><span class="sz">235,944 KB</span></div>
        <div class="frow"><span class="fn"><svg class="f-ico" viewBox="0 0 16 16"><path d="M2.500.5h8l3 3v12h-11z" fill="#f6f8fa" stroke="#8a96a4"/><rect x="5" y="5" width="6" height="7" fill="#a9d0dc"/></svg>MOLD</span><span class="fd2">2015/4/18 16:45</span><span>DAT 文件</span><span class="sz">1 KB</span></div>
      </div>
    </div>
  </section>
</div>
</body>
</html>
```
FILE: styles.css
```css
* { box-sizing: border-box; }
html, body { margin: 0; height: 100%; overflow: hidden; }
body { font-family: "Noto Sans CJK SC", sans-serif; font-size: 12px; color: #000; }
.defs { position: absolute; width: 0; height: 0; }
svg { display: block; flex: none; }
i, em, u { font-style: normal; }

.app { position: relative; width: 1427px; height: 956px; display: flex; flex-direction: column; overflow: hidden; background: #ebebeb; }

/* title bar */
.titlebar { height: 25px; flex: none; display: flex; align-items: center; gap: 3px; padding: 0 0 2px 2px; background: linear-gradient(#4a4a4a 0 2px, #1c1c1c 2px 24px, #000 24px); }
.tb-logo { width: 16px; height: 18px; }
.tb-text { color: #777; font: 12.5px "Liberation Sans", "Noto Sans CJK SC", sans-serif; letter-spacing: .55px; }

/* main menu */
.menubar { height: 42px; flex: none; display: flex; align-items: center; padding-left: 3px; background: linear-gradient(#e9e9e9, #dedede); border-bottom: 1px solid #b9b9b9; overflow: hidden; white-space: nowrap; }
.grip { width: 2px; height: 30px; flex: none; background: repeating-linear-gradient(#999 0 2px, transparent 2px 4px); }
.mini { width: 13px; height: 16px; margin: 0 0 0 3px; }
.tool { display: flex; flex: none; align-items: center; gap: 5px; }
.tool.first { margin-left: 8px; }
.tool.t15 { margin-left: 15px; }
.tool.t10 { margin-left: 10px; }
.tool.t11 { margin-left: 11px; }
.tool.t1 { margin-left: 1px; }
.tool.g4 { gap: 4px; }
.tool.g6 { gap: 6px; }
.ico { width: 31px; height: 31px; }
.ico.i29 { width: 29px; height: 30px; }
.ico.i30 { width: 30px; height: 31px; }
.lb { display: block; font-size: 12px; line-height: 16px; flex: none; margin-top: -2px; }
.w30 { width: 30px; } .w40 { width: 40px; } .w41 { width: 41px; } .w42 { width: 42px; }
.w48 { width: 48px; } .w53 { width: 53px; } .w64 { width: 64px; } .w65 { width: 65px; }
.solo { margin-left: 1px; }
.next { margin-left: 15px; }
.mono { font: 10px "Liberation Mono", monospace; }
.sep { width: 2px; height: 37px; margin: 0 7px 0 11px; background: linear-gradient(90deg, #bdbdbd 50%, #f7f7f7 50%); flex: none; }
.sep.far { margin-left: 23px; margin-right: 8px; }
.sep.tight { margin: 0 5px 0 10px; }
.caret { margin: 0 6px 0 7px; width: 0; height: 0; border: 3.5px solid transparent; border-top: 4px solid #222; border-bottom: 0; flex: none; }

.ribbon { height: 42px; flex: none; background: linear-gradient(#dcdcdc, #c7c7c7); }

/* work area */
.work { flex: 1; min-height: 0; display: flex; }
.panel { width: 624px; flex: none; display: flex; flex-direction: column; background: #ebebeb; overflow: hidden; }
.phead { height: 22px; flex: none; display: flex; align-items: center; padding-left: 8px; }
.pgrip { width: 574px; height: 0; border-top: 2px dotted #b2b2b2; }
.pup { margin-left: 6px; width: 0; height: 0; border: 3.5px solid transparent; border-bottom: 4px solid #444; border-top: 0; }
.pclose { margin-left: 8px; font: bold 14px/1 "Liberation Sans", sans-serif; }

.navtree { width: 612px; height: 811px; margin-left: 2px; flex: none; border: 1px solid #808080; border-width: 1px 1px 2px 1px; background: #fff; display: flex; flex-direction: column; overflow: hidden; font: 11px "Liberation Mono", "Noto Sans CJK SC", monospace; letter-spacing: -.6px; }
.cols { display: grid; grid-template-columns: 209px 41px 63px 36px 41px 53px 35px 1fr; }
.thead { height: 17px; flex: none; background: linear-gradient(#f3f3f3, #dbdbdb); border-bottom: 2px solid #8a8a8a; font: 12px/15px "Noto Sans CJK SC", sans-serif; letter-spacing: 0; margin-right: 2px; }
.thead span { padding: 1px 0 0 6px; white-space: nowrap; }
.thead span:not(:last-child) { border-right: 1px solid #b4b4b4; box-shadow: inset -1px 0 0 #fff; }
.tbody { flex: 1; min-height: 0; display: flex; }
.rows { width: 593px; flex: none; }
.row { height: 20px; border-bottom: 1px solid #e4e4e4; background: #fff; color: #222; line-height: 19px; }
.row:nth-child(even) { background: #f5f5f5; }
.row.red { color: #f00; }
.row > span { display: flex; align-items: center; padding-top: 1px; padding-left: 5px; border-right: 1px solid #e4e4e4; white-space: nowrap; min-width: 0; }
.row > span:nth-child(2) { padding-left: 7px; }
.row b { font-weight: normal; }
.row .cjk { font: 12px "Noto Sans CJK SC", sans-serif; letter-spacing: 0; color: #222; }
.el { letter-spacing: -2.1px; margin-left: 2px; }

.name { position: relative; }
.row > .name.plain { padding-left: 4px; }
.row > .name.unused { padding-left: 21px; }
.row > .name.lv0 { padding-left: 5px; }
.row > .name.lv1 { padding-left: 24px; }
.row > .name.lv2 { padding-left: 58px; }
.st { width: 17px; height: 17px; }
.fd { width: 14px; height: 16px; margin-left: 1px; }
.name b { margin-left: 3px; }
.lv1 b, .lv0 b { margin-left: 4px; }
.lv0 .st { margin-left: 5px; }
.lv1 .st { margin-left: 5px; }
.mn { position: relative; z-index: 1; width: 9px; height: 9px; flex: none; border: 1px solid #888; border-radius: 2px; background: linear-gradient(#fff 0 3px, #444 3px 4px, #fff 4px); background-size: 5px 100%; background-repeat: no-repeat; background-position: center; background-color: #fff; }
.lv1::before, .lv2::before { content: ""; position: absolute; left: 28px; top: -1px; bottom: -1px; border-left: 1px dotted #999; }
.lv1::after { content: ""; position: absolute; left: 33px; top: 9px; width: 5px; border-top: 1px dotted #999; }
.lv0::after { content: ""; position: absolute; left: 14px; top: 9px; width: 5px; border-top: 1px dotted #999; }
.lv2::after { content: ""; position: absolute; left: 47px; top: -1px; width: 11px; height: 11px; border-left: 1px dotted #999; border-bottom: 1px dotted #999; }
.unused::after { content: ""; position: absolute; left: 9px; top: 9px; width: 10px; height: 20px; border-left: 1px dotted #999; border-top: 1px dotted #999; }
.q { display: block; font: bold 17px/18px "Liberation Sans", sans-serif; letter-spacing: 0; color: #ffe800; -webkit-text-stroke: .7px #555; }
.fl { width: 15px; height: 14px; margin-top: -2px; }
.fl.tk { margin-left: -2px; }

.vscroll { width: 17px; flex: none; margin-left: 0; border-left: 1px solid #e8e8e8; display: flex; flex-direction: column; align-items: center; background: #f5f5f5; }
.vup { margin-top: 8px; width: 0; height: 0; border: 3.5px solid transparent; border-bottom: 4px solid #333; border-top: 0; }
.vthumb { position: relative; margin-top: 7px; width: 15px; height: 490px; border-radius: 2px; border: 1px solid #bbb; background: linear-gradient(90deg, #f5f5f5, #d2d2d2 60%, #b5b5b5); }
.vthumb::after { content: ""; position: absolute; left: 3px; right: 3px; top: 240px; height: 7px; background: repeating-linear-gradient(#777 0 1px, transparent 1px 2px); }

.hscroll { flex: 1; display: flex; align-items: center; gap: 4px; padding: 0 0 0 2px; }
.h1 { width: 243px; height: 2px; background: #c6c6c6; }
.h2 { width: 320px; height: 6px; background: #cfcfcf; }

/* graphics window */
.viewport { flex: 1; position: relative; background: #000; border-left: 1px solid #b00000; border-top: 1px solid #a00000; overflow: hidden; }
.model { position: absolute; left: 0; top: 0; width: 802px; height: 846px; }
.axis text { font: 18px "Liberation Sans", sans-serif; }

.dialog { position: absolute; left: 179px; top: 343px; width: 310px; height: 113px; display: flex; flex-direction: column; background: #e8e8e8; border: 1px solid #d2d2d2; border-top: 0; border-radius: 6px 6px 0 0; }
.dlg-title { height: 23px; flex: none; padding: 5px 0 0 8px; font-size: 12px; line-height: 16px; color: #fff; border-radius: 6px 6px 0 0; background: linear-gradient(#8a8a8a, #3a3a3a 6px, #1b1b1b 8px); border-bottom: 1px solid #000; }
.dlg-msg { height: 49px; flex: none; display: flex; align-items: center; gap: 13px; padding: 7px 0 0 14px; font: 12px "Liberation Sans", "Noto Sans CJK SC", sans-serif; letter-spacing: -.1px; color: #111; }
.dlg-ico { width: 32px; height: 34px; }
.dlg-foot { margin: 0 7px; height: 32px; display: flex; justify-content: center; padding: 5px 3px 0 0; background: linear-gradient(#e8e8e8, #d8d8d8); }
.dlg-btn { width: 61px; height: 23px; padding: 0; font: 12px "Noto Sans CJK SC", sans-serif; color: #000; border: 1px solid #7b7b7b; border-radius: 3px; background: linear-gradient(#f8f8f8, #e6e6e6 50%, #cfcfcf); box-shadow: inset 0 0 0 1px #fff; }

/* stamp */
.stamp { position: absolute; left: 8px; top: 822px; width: 130px; height: 134px; }
.st-ug { font: bold 18px "Liberation Sans", sans-serif; fill: none; stroke: #f00; stroke-width: 1.5; letter-spacing: 1px; }
.st-cn { font: bold 14px "Noto Sans CJK SC", sans-serif; fill: #f00; }
.st-url { font: bold 9.5px "Liberation Sans", sans-serif; fill: #fff; }

/* explorer */
.explorer { position: absolute; left: 523px; top: 699px; right: 0; bottom: 0; display: flex; flex-direction: column; padding-left: 6px; border-top: 1px solid #5a6a7a; border-left: 1px solid #5a6a7a; border-radius: 6px 0 0 0; overflow: hidden; background: linear-gradient(#8eaed0, #b9d1ea 62px, #e4edf6 130px); font: 12px "DejaVu Sans", "Noto Sans CJK SC", sans-serif; color: #1a1a1a; }
.ex-head { height: 55px; flex: none; padding-top: 32px; margin-left: -6px; padding-left: 6px; display: flex; }
.ex-nav { width: 71px; height: 24px; margin-top: 0; }
.addr { flex: 1; height: 23px; display: flex; align-items: center; gap: 8px; padding-left: 4px; background: #eef3fa; border: 1px solid #7f8da0; border-right: 0; border-bottom-color: #c6d0dc; font-size: 11.5px; }
.ad-ico { width: 13px; height: 16px; }
.tri { width: 0; height: 0; flex: none; border: 4px solid transparent; border-left: 5px solid #111; border-right: 0; margin: 0 .5px 0 4px; }
.addr span { white-space: nowrap; }
.ex-menu { height: 23px; flex: none; margin-top: 7px; display: flex; align-items: center; gap: 16px; padding-left: 10px; background: linear-gradient(#fff, #f4f5fb 25%, #dfe3f0); border-bottom: 1px solid #b3bfd2; font: 12px "Noto Sans CJK SC", sans-serif; }
.ex-tools { height: 32px; flex: none; display: flex; align-items: center; font: 12px "Noto Sans CJK SC", sans-serif; color: #1e395b; background: linear-gradient(#fff, #f4f8fd 45%, #dce6f4 50%, #dbe5f3); border-bottom: 1px solid #a5b5cb; }
.act { display: flex; align-items: center; gap: 4px; white-space: nowrap; }
.a1 { margin-left: 18px; }
.a2 { margin-left: 30px; }
.a3 { margin-left: 30px; }
.a4 { margin-left: 30px; }
.a5 { margin-left: 30px; }
.act-ico { width: 16px; height: 16px; }
.dn { width: 0; height: 0; margin-left: 2px; border: 4px solid transparent; border-top: 4px solid #1e395b; border-bottom: 0; }
.ex-body { flex: 1; min-height: 0; display: flex; background: #fff; }
.ex-side { width: 180px; flex: none; padding-top: 9px; border-right: 1px solid #d6e5f5; }
.sd { height: 23px; display: flex; align-items: center; gap: 6px; font: 12px "Noto Sans CJK SC", sans-serif; white-space: nowrap; }
.sd.top { padding-left: 20px; }
.sd.sub { padding-left: 31px; gap: 4px; }
.sd.lib { margin-top: 19px; }
.sd-ico { width: 16px; height: 16px; }
.ex-files { flex: 1; min-width: 0; }
.fhead { height: 34px; display: grid; grid-template-columns: 273px 119px 120px 80px; color: #4c607a; font: 12px "Noto Sans CJK SC", sans-serif; }
.fhead span { position: relative; padding: 5px 0 0 7px; height: 27px; line-height: 18px; border-right: 1px solid #dde8f4; }
.fhead .c1 { padding-left: 19px; }
.fhead .c1::before { content: ""; position: absolute; left: 138px; top: 1px; width: 0; height: 0; border: 4px solid transparent; border-bottom: 3px solid #9eb6ce; border-top: 0; }
.frow { width: 574px; height: 21px; margin-left: 15px; padding: 0 4px 0 3px; display: grid; grid-template-columns: 261px 119px 120px 1fr; align-items: center; border: 1px solid transparent; color: #666; font-size: 11px; white-space: nowrap; }
.frow.sel { border-color: #7da2ce; border-radius: 3px; background: linear-gradient(#dcebfc, #c1dcfc); }
.fn { display: flex; align-items: center; gap: 5px; color: #1a1a1a; font-size: 12px; }
.fd2 { color: #666; }
.f-ico { width: 15px; height: 16px; }
.sz { text-align: right; }
```
